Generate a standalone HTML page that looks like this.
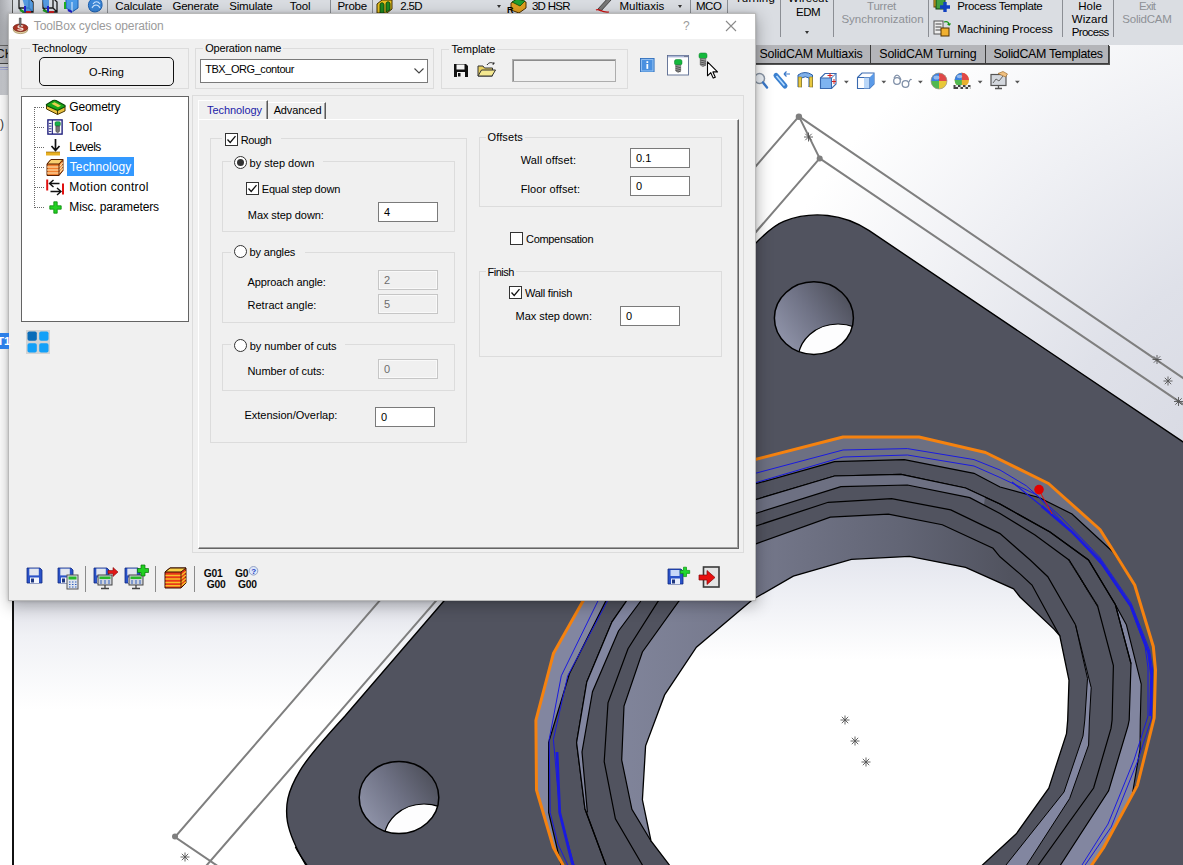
<!DOCTYPE html>
<html><head><meta charset="utf-8"><title>ToolBox cycles operation</title>
<style>
*{box-sizing:border-box;margin:0;padding:0}
html,body{width:1183px;height:865px;overflow:hidden;background:#fff}
body{position:relative;font-family:"Liberation Sans",sans-serif;font-size:11px;color:#000}
.abs{position:absolute}
#scene{position:absolute;left:0;top:0;width:1183px;height:865px}
#ribbon{position:absolute;left:0;top:0;width:1183px;height:45px;background:#dadde2}
.rt{line-height:14px}
.rg{color:#8e9196}
.vsep{position:absolute;width:1px;background:#8b8e94}
#tabs{position:absolute;left:0;top:45px;height:19px}
.ctab{position:absolute;top:45px;height:19px;background:#b4b5b9;border:1px solid #3c3c3c;border-top:none;font-size:12.4px;line-height:17px;white-space:nowrap;text-align:center;color:#000;box-shadow:1px 1px 0 #555}
#dlg{position:absolute;left:8px;top:13px;width:747.500px;height:588px;background:#f0f0f0;border:1px solid #b9b9b9;box-shadow:1px 4px 15px rgba(0,0,0,.30),0 0 3px rgba(0,0,0,.18)}
#dlg .in{position:absolute;left:-10px;top:-15px;width:1183px;height:865px}
#ttl{position:absolute;left:9px;top:14px;width:745.500px;height:25px;background:#fff}
.t{position:absolute;white-space:nowrap;line-height:13px;font-size:11px}
.gb{position:absolute;border:1px solid #dcdcdc}
.lg{position:absolute;background:#f0f0f0;white-space:nowrap;line-height:13px;padding:0 2px}
.inp{position:absolute;background:#fff;border:1px solid #7a7a7a;height:20px;line-height:18px;padding-left:5px;font-size:11px}
.inp.dis{background:#f0f0f0;border-color:#c6c6c6;color:#6d6d6d;box-shadow:inset 0 0 0 1px #f9f9f9}
.cb{position:absolute;width:13px;height:13px;background:#fff;border:1px solid #333}
.rb{position:absolute;width:13px;height:13px;background:#fff;border:1px solid #333;border-radius:50%}
.rb.on::after{content:"";position:absolute;left:2px;top:2px;width:7px;height:7px;border-radius:50%;background:#333}
.tree{font-size:12.4px;line-height:15px}
</style></head><body>
<svg id="scene" width="1183" height="865" viewBox="0 0 1183 865">
<defs>
<radialGradient id="bg1" gradientUnits="userSpaceOnUse" cx="1350" cy="560" r="650"><stop offset="0" stop-color="#cfd1dc"/><stop offset="0.5" stop-color="#dfe1e9"/><stop offset="1" stop-color="#ffffff"/></radialGradient>
<linearGradient id="bg2" gradientUnits="userSpaceOnUse" x1="0" y1="596" x2="0" y2="710"><stop offset="0" stop-color="#dcdee6"/><stop offset="0.35" stop-color="#f0f1f5"/><stop offset="1" stop-color="#ffffff"/></linearGradient>
<linearGradient id="holeg" gradientUnits="userSpaceOnUse" x1="0" y1="556" x2="0" y2="660"><stop offset="0" stop-color="#e4e6ee"/><stop offset="1" stop-color="#ffffff"/></linearGradient>
<linearGradient id="wallg" gradientUnits="userSpaceOnUse" x1="620" y1="0" x2="1010" y2="0"><stop offset="0" stop-color="#80849a"/><stop offset="0.36" stop-color="#74778a"/><stop offset="0.72" stop-color="#626575"/><stop offset="1" stop-color="#51535f"/></linearGradient>
<linearGradient id="h1g" gradientUnits="userSpaceOnUse" x1="785" y1="340" x2="845" y2="298"><stop offset="0" stop-color="#8c90a5"/><stop offset="0.5" stop-color="#6f7285"/><stop offset="1" stop-color="#51535f"/></linearGradient>
<linearGradient id="h2g" gradientUnits="userSpaceOnUse" x1="370" y1="820" x2="430" y2="778"><stop offset="0" stop-color="#8c90a5"/><stop offset="0.5" stop-color="#6f7285"/><stop offset="1" stop-color="#51535f"/></linearGradient>
<clipPath id="c1"><ellipse cx="813.9" cy="318.1" rx="39.5" ry="36.3"/></clipPath>
<clipPath id="c2"><ellipse cx="399" cy="797.5" rx="39.8" ry="36.1"/></clipPath>
</defs>
<rect width="1183" height="865" fill="url(#bg1)"/>
<rect y="596" width="1183" height="269" fill="url(#bg2)"/>
<g stroke="#7f7f7f" stroke-width="2" fill="none" stroke-linecap="round">
<path d="M798.9,116.4 L1200,389.6"/>
<path d="M819.7,158.4 L1200,415.8"/>
<path d="M798.9,116.4 L819.7,158.4"/>
<path d="M798.9,116.4 L175,837 L220,867.6"/>
<path d="M819.7,158.4 L205,867.2"/>
</g>
<circle cx="798.9" cy="116.8" r="3.2" fill="#7f7f7f"/><circle cx="819.7" cy="158.6" r="3" fill="#7f7f7f"/><circle cx="175" cy="836.5" r="3" fill="#7f7f7f"/>
<path d="M744,256 C755.8,242.4 770.8,226.4 783.8,221.3 A92.4,92.4 0 0 1 869.2,230.7 L1200,453.3 L1200,900 L330,900 L305.8,865 C297,850 290,836 287.5,822 C285,806 287,792 300,770.6 C308,757 323,740 345,716 L443.7,601.2 Z" fill="#51535f" stroke="#000" stroke-width="1.4"/>
<path d="M295.3,846.9 C300,856 306,864 312,872" fill="none" stroke="#000" stroke-width="1.2"/>
<ellipse cx="813.9" cy="318.1" rx="39.5" ry="36.3" fill="url(#h1g)"/>
<g clip-path="url(#c1)"><ellipse cx="838" cy="360" rx="40" ry="36" fill="#fdfdfe" stroke="#000" stroke-width="1.2"/></g>
<ellipse cx="813.9" cy="318.1" rx="39.5" ry="36.3" fill="none" stroke="#000" stroke-width="1.5"/>
<ellipse cx="399" cy="797.5" rx="39.8" ry="36.1" fill="url(#h2g)"/>
<g clip-path="url(#c2)"><ellipse cx="424" cy="840" rx="40" ry="36" fill="#fdfdfe" stroke="#000" stroke-width="1.2"/></g>
<ellipse cx="399" cy="797.5" rx="39.8" ry="36.1" fill="none" stroke="#000" stroke-width="1.5"/>
<polygon points="575.0,885.0 563.0,865.0 553.4,847.5 536.5,790.0 535.9,720.3 553.4,653.6 583.0,601.0 640.0,540.0 700.0,490.0 755.0,459.5 843.0,437.0 919.0,437.0 985.5,452.5 1048.5,483.5 1100.0,529.5 1134.7,585.0 1153.3,646.5 1155.5,670.0 1154.2,718.0 1137.3,785.6 1103.4,848.0 1091.7,865.0 1078.0,885.0" fill="#6d7082"/>
<polygon points="575.0,885.0 563.0,865.0 553.4,847.5 536.5,790.0 535.9,720.3 553.4,653.6 583.0,601.0 640.0,540.0 660.0,560.0 605.8,601.0 569.3,674.0 548.6,742.6 548.6,812.5 561.0,865.0 566.0,885.0" fill="#8286a0"/>
<polygon points="566.0,885.0 561.0,865.0 548.6,812.5 548.6,742.6 569.3,674.0 605.8,601.0 755.3,483.9 834.5,461.7 904.3,459.6 974.0,473.3 1000.0,487.0 1039.0,497.5 1072.0,514.0 1113.0,552.0 1134.7,585.0 1153.3,646.5 1155.5,670.0 1154.2,718.0 1137.3,785.6 1103.4,848.0 1091.7,865.0 1078.0,885.0" fill="#51535f" stroke="#000" stroke-width="1.2"/>
<polygon points="1115.3,604.4 1126.4,624.8 1141.2,684.0 1140.3,720.0 1140.0,749.0 1132.0,796.0 1137.3,785.6 1103.4,848.0 1091.7,865.0 1078.0,885.0 1047.0,885.0 1060.5,865.0 1108.6,790.8 1128.0,725.8 1129.2,720.0 1131.0,663.6" fill="#8286a0"/>
<polyline points="1115.3,604.4 1126.4,624.8 1141.2,684.0 1140.3,720.0 1140.0,749.0 1132.0,796.0" fill="none" stroke="#000" stroke-width="1.1"/>
<polygon points="612.0,885.0 605.8,865.0 585.0,809.0 576.6,742.6 586.8,682.0 612.0,621.8 626.5,601.0 755.3,499.7 834.5,476.0 901.0,474.4 965.6,488.0 1000.0,504.0 1050.0,532.0 1088.5,560.0 1115.3,604.4 1131.0,663.6 1129.2,720.0 1128.0,725.8 1108.6,790.8 1060.5,865.0 1047.0,885.0" fill="#51535f" stroke="#000" stroke-width="1.2"/>
<polygon points="700.0,560.0 755.3,499.7 834.5,476.0 901.0,474.4 965.6,488.0 985.0,497.0 984.0,505.0 969.8,497.6 907.4,485.0 840.9,486.6 755.3,513.5 705.0,572.0" fill="#6d7082"/>
<polygon points="626.5,601.0 612.0,621.8 586.8,682.0 576.6,742.6 585.0,809.0 587.4,812.5 582.0,752.0 592.5,691.7 618.5,631.0 640.8,601.0" fill="#8286a0"/>
<polyline points="755.3,513.5 840.9,486.6 907.4,485.0 969.8,497.6 1000.0,513.5 1035.0,535.0 1069.0,560.0 1097.7,606.3 1113.4,665.5 1112.1,720.0 1111.0,728.4 1093.6,788.0 1038.4,865.0 1024.0,885.0" fill="none" stroke="#000" stroke-width="1.2"/>
<polyline points="1069.0,560.0 1097.7,606.3" fill="none" stroke="#000" stroke-width="1.6" stroke-dasharray="1,1"/>
<polyline points="640.8,601.0 618.5,631.0 592.5,691.7 582.0,752.0 587.4,812.5" fill="none" stroke="#000" stroke-width="1.2"/>
<polyline points="626.5,601.0 612.0,621.8 586.8,682.0 576.6,742.6 585.0,809.0 605.8,865.0 612.0,885.0" fill="none" stroke="#000" stroke-width="1.2"/>
<polyline points="755.3,499.7 834.5,476.0 901.0,474.4 965.6,488.0 1000.0,504.0 1050.0,532.0 1088.5,560.0 1115.3,604.4 1131.0,663.6" fill="none" stroke="#000" stroke-width="1.2"/>
<polyline points="652.0,885.0 642.4,865.0 615.4,818.9 604.2,761.6 608.0,702.8 628.0,648.8 658.3,601.0 700.0,560.0 755.3,526.2 828.2,502.3 891.6,498.7 950.8,509.9 1000.0,533.6 1030.2,560.0 1047.8,576.7 1075.5,624.8" fill="none" stroke="#000" stroke-width="1.2"/>
<polygon points="1075.5,624.8 1087.5,678.4 1084.8,720.0 1083.0,736.0 1064.0,792.0 1006.0,865.0 990.0,885.0 1012.0,885.0 1026.7,865.0 1069.6,798.6 1088.6,745.0 1089.4,720.0 1091.2,687.7 1075.5,624.8" fill="#8286a0" stroke="#000" stroke-width="1"/>
<polygon points="651.0,841.0 651.0,841.0 631.9,809.3 621.7,760.0 624.0,706.0 642.4,652.0 679.0,601.0 720.0,570.0 755.3,544.1 830.3,517.1 888.4,514.1 942.3,524.7 993.0,548.3 1000.0,556.8 1020.0,573.9 1032.0,585.0 1059.8,635.9" fill="url(#wallg)" stroke="#000" stroke-width="1.2"/>
<polygon points="680.0,885.0 669.4,865.0 651.0,841.0 642.4,799.8 645.6,745.8 664.6,694.9 696.4,647.2 751.0,601.0 755.3,598.0 793.3,576.2 851.4,559.3 909.5,556.4 965.6,567.4 1013.6,588.8 1020.0,597.0 1054.2,629.4 1059.8,635.9 1069.0,680.3 1067.7,720.0 1066.5,733.6 1048.8,788.2 1016.3,833.8 982.5,865.0 960.0,885.0" fill="url(#holeg)" stroke="#000" stroke-width="1.3"/>
<polyline points="574.0,885.0 567.7,865.0 558.0,844.0 550.2,812.5 549.2,739.4 561.3,675.8 597.9,601.0 690.0,520.0 755.3,473.3 843.0,450.0 907.4,448.6 974.0,459.6 1000.0,470.0 1026.3,485.8 1060.0,516.0 1099.6,557.0 1131.0,603.0 1149.5,650.0 1152.5,668.0 1151.6,718.0 1137.3,762.0 1111.2,827.0 1085.2,865.0 1075.0,880.0" fill="none" stroke="#1a1ae0" stroke-width="1"/>
<polyline points="580.0,885.0 574.0,865.0 559.7,812.5 553.4,739.4 567.7,675.8 607.4,601.0 690.0,530.0 755.3,482.8 843.0,457.0 907.4,455.0 974.0,466.0 1000.0,477.5 1036.5,494.7 1070.0,530.0 1102.6,566.0 1130.0,606.0 1145.0,646.0 1148.0,668.0 1148.0,716.0 1134.0,760.0 1108.0,824.0 1082.0,865.0 1072.0,880.0" fill="none" stroke="#1a1ae0" stroke-width="1"/>
<polyline points="1041.6,506.0 1072.0,532.0 1099.6,560.0 1131.0,606.3 1148.5,652.5 1151.5,675.0 1150.5,716.0" fill="none" stroke="#1a1ae0" stroke-width="2.6"/>
<polyline points="1012.0,482.0 1041.6,506.0" fill="none" stroke="#1a1ae0" stroke-width="1.2"/>
<polyline points="557.0,752.0 559.7,812.5 572.0,862.0 580.0,885.0" fill="none" stroke="#1a1ae0" stroke-width="2.8"/>
<polyline points="575.0,885.0 563.0,865.0 553.4,847.5 536.5,790.0 535.9,720.3 553.4,653.6 583.0,601.0 640.0,540.0 700.0,490.0 755.0,459.5 843.0,437.0 919.0,437.0 985.5,452.5 1048.5,483.5 1100.0,529.5 1134.7,585.0 1153.3,646.5 1155.5,670.0 1154.2,718.0 1137.3,785.6 1103.4,848.0 1091.7,865.0 1078.0,885.0" fill="none" stroke="#f5820f" stroke-width="3" stroke-linejoin="round"/>
<path d="M1039,490 L1052,514" stroke="#e01010" stroke-width="1"/>
<circle cx="1039" cy="489.6" r="4.8" fill="#e00000"/>
<g stroke="#555" stroke-width="0.9"><line x1="804.0" y1="137.0" x2="813.0" y2="137.0"/><line x1="805.3" y1="133.8" x2="811.7" y2="140.2"/><line x1="808.5" y1="132.5" x2="808.5" y2="141.5"/><line x1="811.7" y1="133.8" x2="805.3" y2="140.2"/></g>
<g stroke="#555" stroke-width="0.9"><line x1="1152.5" y1="359.5" x2="1161.5" y2="359.5"/><line x1="1153.8" y1="356.3" x2="1160.2" y2="362.7"/><line x1="1157.0" y1="355.0" x2="1157.0" y2="364.0"/><line x1="1160.2" y1="356.3" x2="1153.8" y2="362.7"/></g>
<g stroke="#555" stroke-width="0.9"><line x1="1163.5" y1="381.0" x2="1172.5" y2="381.0"/><line x1="1164.8" y1="377.8" x2="1171.2" y2="384.2"/><line x1="1168.0" y1="376.5" x2="1168.0" y2="385.5"/><line x1="1171.2" y1="377.8" x2="1164.8" y2="384.2"/></g>
<g stroke="#555" stroke-width="0.9"><line x1="1174.0" y1="401.5" x2="1183.0" y2="401.5"/><line x1="1175.3" y1="398.3" x2="1181.7" y2="404.7"/><line x1="1178.5" y1="397.0" x2="1178.5" y2="406.0"/><line x1="1181.7" y1="398.3" x2="1175.3" y2="404.7"/></g>
<g stroke="#555" stroke-width="0.9"><line x1="840.5" y1="720.0" x2="849.5" y2="720.0"/><line x1="841.8" y1="716.8" x2="848.2" y2="723.2"/><line x1="845.0" y1="715.5" x2="845.0" y2="724.5"/><line x1="848.2" y1="716.8" x2="841.8" y2="723.2"/></g>
<g stroke="#555" stroke-width="0.9"><line x1="850.5" y1="741.0" x2="859.5" y2="741.0"/><line x1="851.8" y1="737.8" x2="858.2" y2="744.2"/><line x1="855.0" y1="736.5" x2="855.0" y2="745.5"/><line x1="858.2" y1="737.8" x2="851.8" y2="744.2"/></g>
<g stroke="#555" stroke-width="0.9"><line x1="861.5" y1="762.0" x2="870.5" y2="762.0"/><line x1="862.8" y1="758.8" x2="869.2" y2="765.2"/><line x1="866.0" y1="757.5" x2="866.0" y2="766.5"/><line x1="869.2" y1="758.8" x2="862.8" y2="765.2"/></g>
<g stroke="#555" stroke-width="0.9"><line x1="180.5" y1="857.0" x2="189.5" y2="857.0"/><line x1="181.8" y1="853.8" x2="188.2" y2="860.2"/><line x1="185.0" y1="852.5" x2="185.0" y2="861.5"/><line x1="188.2" y1="853.8" x2="181.8" y2="860.2"/></g>
</svg>
<div id="ribbon">
<div class="abs" style="left:0;top:0;width:12px;height:45px;background:linear-gradient(90deg,#a9abb0,#cfd1d6)"></div>
<div class="vsep" style="left:12px;top:0;height:14px;background:#555"></div>
<!-- small cube icons -->
<svg class="abs" style="left:16px;top:0" width="92" height="14" viewBox="0 0 92 14">
<g fill="none" stroke="#1b1b1b" stroke-width="1.3"><path d="M3,-2 L3,8 L13,8 L13,-2 M3,8 L7,12 L17,12 L17,2 L13,-2 M13,8 L17,12"/><path d="M27,-2 L27,8 L37,8 L37,-2 M27,8 L31,12 L41,12 L41,2 L37,-2 M37,8 L41,12"/></g>
<path d="M6,-2 L13,-2 L17,3 L17,11 L10,11 Z" fill="#3d8fe0" opacity=".85"/><path d="M26,-2 L33,-2 L33,8 L28,8 Z" fill="#3d8fe0" opacity=".85"/>
<path d="M9,6 v6" stroke="#2020d0" stroke-width="2"/><path d="M4,10 l4,2" stroke="#20a020" stroke-width="2"/><path d="M10,12 l5,0" stroke="#d02020" stroke-width="2"/>
<path d="M32,6 v6" stroke="#2020d0" stroke-width="2"/><path d="M33,12 l5,0" stroke="#d02020" stroke-width="2"/><path d="M27,10 l4,2" stroke="#20a020" stroke-width="2"/>
<path d="M50,-2 L50,8 L56,12 L62,8 L62,-2 Z" fill="#4a9be8" stroke="#1b5fb0" stroke-width="1"/><path d="M56,2 v10" stroke="#cfe6ff" stroke-width="1.2"/><path d="M49,2 v7" stroke="#20b020" stroke-width="2"/><path d="M52,10 l4,2" stroke="#2020d0" stroke-width="2"/>
<path d="M74,10 C70,4 74,-2 80,-2 C86,-2 88,6 84,10 C80,13 76,12 74,10 Z" fill="#3a86d8" stroke="#1b5fb0" stroke-width="1"/><path d="M76,8 c2,-4 6,-4 8,0 M77,4 c2,-3 5,-3 7,0" stroke="#cfe6ff" stroke-width="1.1" fill="none"/>
</svg>
<div class="vsep" style="left:107px;top:0;height:13px"></div>
<div class="vsep" style="left:330px;top:0;height:13px"></div>
<div class="vsep" style="left:372px;top:0;height:13px"></div>
<svg class="abs" style="left:376px;top:0" width="18" height="14" viewBox="0 0 18 14"><path d="M1,4 L6,0 L16,0 L16,9 L11,13 L1,13 Z" fill="#e8c020" stroke="#403000" stroke-width="1"/><path d="M4,13 L4,5 C4,2 8,2 8,5 L8,13 Z M10,12 L10,4 C10,1 14,1 14,4 L14,10 Z" fill="#1f8a1f" stroke="#0a3a0a" stroke-width=".8"/></svg>
<div class="abs" style="left:496.500px;top:5px;border:2.5px solid transparent;border-top:3px solid #333"></div>
<svg class="abs" style="left:507px;top:0" width="20" height="14" viewBox="0 0 20 14"><path d="M4,3 L10,-1 L19,2 L19,8 L12,13 L4,10 Z" fill="#e0a020" stroke="#503000" stroke-width="1"/><path d="M5,2 L10,-1 L18,1 L13,6 Z" fill="#20a030" stroke="#0a4a0a" stroke-width=".8"/><text x="0" y="13" font-family="Liberation Sans,sans-serif" font-size="9" font-weight="bold" fill="#000">R</text></svg>
<svg class="abs" style="left:593px;top:0" width="20" height="14" viewBox="0 0 20 14"><path d="M5,9 L15,-2 L18,0 L8,11 Z" fill="#777" stroke="#333" stroke-width=".8"/><path d="M3,10 C6,8 8,13 16,12" stroke="#d01010" stroke-width="1.2" fill="none"/></svg>
<div class="abs" style="left:678px;top:5px;border:2.5px solid transparent;border-top:3px solid #333"></div>
<div class="vsep" style="left:690px;top:0;height:13px"></div>
<div class="vsep" style="left:727px;top:0;height:37px"></div>
<div class="vsep" style="left:780px;top:0;height:37px"></div>
<div class="abs" style="left:805px;top:31px;border:2.5px solid transparent;border-top:3px solid #333"></div>
<div class="vsep" style="left:833px;top:0;height:37px"></div>
<div class="vsep" style="left:928px;top:0;height:37px"></div>
<svg class="abs" style="left:933px;top:0" width="18" height="14" viewBox="0 0 18 14"><rect x="1" y="-3" width="9" height="10" fill="#f0c030" stroke="#604000"/><rect x="3" y="-1" width="9" height="10" fill="#40a040" stroke="#104010"/><path d="M12,2 v10 M7,7 h10" stroke="#1040c0" stroke-width="3.4"/></svg>
<svg class="abs" style="left:933px;top:20px" width="18" height="17" viewBox="0 0 18 17"><rect x="1" y="1" width="9" height="13" fill="#eee" stroke="#555"/><path d="M2.5,4 h6 M2.5,7 h6 M2.5,10 h6" stroke="#444" stroke-width="1"/><rect x="8" y="8" width="8" height="8" fill="#f0b030" stroke="#503000"/><path d="M11,2 c3,-1 5,0 5,3 l-1.5,-1 m1.5,1 l1.5,-1.5" stroke="#109010" stroke-width="1.2" fill="none"/></svg>
<div class="vsep" style="left:1062px;top:0;height:37px"></div>
<div class="vsep" style="left:1113px;top:0;height:37px"></div>

<span class="t rt" style="left:115.3px;top:0px;font-size:11.5px;letter-spacing:-0.139px;">Calculate</span>
<span class="t rt" style="left:172.4px;top:0px;font-size:11.5px;letter-spacing:-0.194px;">Generate</span>
<span class="t rt" style="left:229.2px;top:0px;font-size:11.5px;letter-spacing:-0.181px;">Simulate</span>
<span class="t rt" style="left:289.8px;top:0px;font-size:11.5px;letter-spacing:-0.127px;">Tool</span>
<span class="t rt" style="left:337.4px;top:0px;font-size:11.5px;letter-spacing:-0.237px;">Probe</span>
<span class="t rt" style="left:400.3px;top:0px;font-size:11.5px;letter-spacing:-0.699px;">2.5D</span>
<span class="t rt" style="left:531.9px;top:0px;font-size:11.5px;letter-spacing:-0.681px;">3D HSR</span>
<span class="t rt" style="left:619.4px;top:0px;font-size:11.5px;letter-spacing:0.030px;">Multiaxis</span>
<span class="t rt" style="left:695.9px;top:0px;font-size:11.5px;letter-spacing:-0.381px;">MCO</span>
<span class="t rt" style="left:735px;top:-8px;font-size:11.5px;letter-spacing:0.203px;">Turning</span>
<span class="t rt" style="left:788px;top:-8px;font-size:11.5px;letter-spacing:0.145px;">Wirecut</span>
<span class="t rt" style="left:796px;top:6px;font-size:11.5px;letter-spacing:-0.521px;">EDM</span>
<span class="t rt rg" style="left:867px;top:0px;font-size:11.5px;letter-spacing:-0.192px;">Turret</span>
<span class="t rt rg" style="left:841.4px;top:13px;font-size:11.5px;letter-spacing:0.031px;">Synchronization</span>
<span class="t rt" style="left:957.3px;top:0px;font-size:11.5px;letter-spacing:-0.388px;">Process Template</span>
<span class="t rt" style="left:957.3px;top:23px;font-size:11.5px;letter-spacing:-0.103px;">Machining Process</span>
<span class="t rt" style="left:1078.3px;top:0px;font-size:11.5px;letter-spacing:-0.014px;">Hole</span>
<span class="t rt" style="left:1071.8px;top:13px;font-size:11.5px;letter-spacing:0.036px;">Wizard</span>
<span class="t rt" style="left:1071.8px;top:26px;font-size:11.5px;letter-spacing:-0.692px;">Process</span>
<span class="t rt rg" style="left:1139px;top:0px;font-size:11.5px;letter-spacing:-0.743px;">Exit</span>
<span class="t rt rg" style="left:1122.3px;top:13px;font-size:11.5px;letter-spacing:-0.218px;">SolidCAM</span>
</div>
<!-- command manager tabs -->
<div class="abs" style="left:0;top:45px;width:10px;height:20px;background:#b4b5b9;border-top:1px solid #666;border-bottom:2px solid #444"></div>
<span class="t" style="left:-4px;top:48px;font-size:12px;color:#111">CK</span>
<div class="ctab" style="left:755px;width:116px"></div><span class="t " style="left:759.5px;top:47px;font-size:12.4px;letter-spacing:-0.207px;line-height:15px">SolidCAM Multiaxis</span>
<div class="ctab" style="left:870px;width:116px"></div><span class="t " style="left:879.3px;top:47px;font-size:12.4px;letter-spacing:-0.172px;line-height:15px">SolidCAM Turning</span>
<div class="ctab" style="left:985px;width:124px"></div><span class="t " style="left:993.4px;top:47px;font-size:12.4px;letter-spacing:-0.305px;line-height:15px">SolidCAM Templates</span>
<!-- left strip -->
<div class="abs" style="left:0;top:64px;width:10px;height:31px;background:linear-gradient(90deg,#c4c6cb,#dcdee3)"></div>
<div class="abs" style="left:0;top:67px;width:10px;height:1px;background:#8f95c8"></div>
<div class="abs" style="left:0;top:69px;width:10px;height:1px;background:#aab0d8"></div>
<div class="abs" style="left:0;top:95px;width:11.500px;height:770px;background:#fff"></div>
<div class="abs" style="left:11.500px;top:95px;width:2px;height:770px;background:#111"></div>
<span class="t" style="left:0;top:118px;font-size:12px;color:#333">)</span>
<div class="abs" style="left:0;top:333px;width:8.800px;height:16px;background:#2d7fe8;z-index:5"></div>
<span class="t" style="left:-3px;top:334.500px;font-size:11.500px;color:#fff;font-weight:bold;z-index:6">T1</span>
<!-- heads-up toolbar -->
<svg class="abs" style="left:752px;top:68px" width="280" height="26" viewBox="0 0 280 26">
<g fill="none">
<circle cx="7.500" cy="10.500" r="5" stroke="#8a96a6" stroke-width="1.500" fill="#eef3f9"/><path d="M11,14.500 l4,5" stroke="#3a78c8" stroke-width="2.400" stroke-linecap="round"/>
<path d="M24,7.500 l9,10.500" stroke="#3a80d0" stroke-width="5" stroke-linecap="round"/><path d="M24.500,8 l8,9.500" stroke="#b8dcff" stroke-width="1.600"/><path d="M38,6 h-6 m0,0 l2.500,-2.500 m-2.500,2.500 l2.500,2.500" stroke="#3a78c8" stroke-width="1.200"/>
<path d="M46,7 q7,-5 14.500,0 v12 q-3,-2.500 -3.500,0 v-9 q-3.500,-2.500 -7.500,0 v9 q-1,-2.500 -3.500,0 z" fill="#7fb0ea" stroke="#2a5fa8" stroke-width="1"/><path d="M46.500,9 h3 v10 h-3 z M57.500,9 h3 v10 h-3 z" fill="#e8c840" stroke="#a08010" stroke-width=".6"/>
<path d="M68.500,10 l4.500,-4.500 h11 v10.500 l-4.500,4.500 h-11 z" fill="#fff" stroke="#3a6ab0" stroke-width="1.100"/><path d="M68.500,10 h11 v10.500 h-11 z" fill="#7fb4f0" stroke="#3a6ab0" stroke-width="1.100"/><path d="M79.500,10 l4.500,-4.500" stroke="#3a6ab0" stroke-width="1"/><path d="M78,5 v5 M75.500,7.500 h5 M82,11 v5 M80,13.500 h4" stroke="#d02020" stroke-width="1"/>
<path d="M92,12.800 h4.800 l-2.400,2.800 z" fill="#555"/>
<path d="M105.500,9.500 l4.500,-4.500 h12 v11 l-4.500,4.500 h-12 z" fill="#fdfdfe" stroke="#3a6ab0" stroke-width="1.100"/><path d="M117.500,9.500 l4.500,-4.500 v11 l-4.500,4.500 z" fill="#5a9ae8"/><path d="M105.500,9.500 h12 v11" stroke="#3a6ab0" stroke-width="1"/><path d="M112,9.500 h5.500 v11 h-5.500 z" fill="#a8ccf6" opacity=".8"/>
<path d="M129.400,12.800 h4.800 l-2.400,2.800 z" fill="#555"/>
<circle cx="145" cy="13" r="3.300" stroke="#8090a8" stroke-width="1.300"/><circle cx="153.500" cy="16" r="3.300" stroke="#8090a8" stroke-width="1.300"/><path d="M142,10 c2,-4 5,-4 7,2 M157,14 c1,-3 2,-3 2.500,-2" stroke="#8090a8" stroke-width="1.200"/>
<path d="M166,12.800 h4.800 l-2.400,2.800 z" fill="#555"/>
</g>
<circle cx="187" cy="13" r="8" fill="#e8c030"/><path d="M187,13 L187,5 A8,8 0 0 1 195,13 Z" fill="#e04848"/><path d="M187,13 L195,13 A8,8 0 0 1 187,21 Z" fill="#e8c838"/><path d="M187,13 L187,21 A8,8 0 0 1 179,13 Z" fill="#50b850"/><path d="M187,13 L179,13 A8,8 0 0 1 187,5 Z" fill="#3a80e0"/><circle cx="187" cy="13" r="8" fill="none" stroke="#999" stroke-width=".7"/><ellipse cx="184.500" cy="9.500" rx="3" ry="2" fill="#fff" opacity=".45"/>
<circle cx="209.800" cy="12" r="7.200" fill="#e8b030"/><path d="M209.800,12 L209.800,4.800 A7.200,7.200 0 0 1 217,12 Z" fill="#e04848"/><path d="M209.800,12 L202.600,12 A7.200,7.200 0 0 1 209.800,4.800 Z" fill="#3a80e0"/><path d="M209.800,12 L202.600,12 A7.200,7.200 0 0 0 209.800,19.200 Z" fill="#50b850"/><ellipse cx="207.500" cy="8.500" rx="2.800" ry="1.800" fill="#fff" opacity=".45"/>
<path d="M201.500,17 h17 v4 h-17 z" fill="#444"/><path d="M203.500,17 h2.500 v2 h-2.500z M208.500,17 h2.500 v2 h-2.500z M213.500,17 h2.500 v2 h-2.500z M206,19 h2.500 v2 h-2.500z M211,19 h2.500 v2 h-2.500z M216,19 h2.500 v2 h-2.500z" fill="#e8e8e8"/>
<path d="M225.700,12.800 h4.800 l-2.400,2.800 z" fill="#555"/>
<rect x="239" y="6.500" width="15" height="11" fill="#d4d8de" stroke="#555" stroke-width="1.200"/><path d="M241,15 l3,-4 l3,2 l4,-5" stroke="#666" stroke-width="1" fill="none"/><path d="M243,20.500 h7 M246.500,17.500 v3" stroke="#555" stroke-width="1.300"/><path d="M246,5.500 l5,-2 l4.500,2.500 l-2,3 z" fill="#f0c080" stroke="#a07030" stroke-width=".7"/>
<path d="M263,12.800 h4.800 l-2.400,2.800 z" fill="#555"/>
</svg>

<div id="dlg"></div>
<div id="ttl"></div>
<!-- title icon -->
<svg class="abs" style="left:12px;top:17px" width="17" height="18" viewBox="0 0 17 18">
<ellipse cx="8.500" cy="12.800" rx="7.300" ry="3.800" fill="#e0cfa0" stroke="#a08858" stroke-width=".7"/>
<ellipse cx="8.500" cy="10.800" rx="7.300" ry="3.800" fill="#a83424" stroke="#6a1810" stroke-width=".7"/>
<path d="M11,9.300 c-2,-1.200 -5,-.6 -5,.8 c0,1.400 5,.6 5,2 c0,1.200 -3.500,1.400 -5.500,.4" fill="none" stroke="#f4e8e0" stroke-width="1.300"/>
<path d="M7.300,1 h1.800 v6.500 l-.9,2 l-.9,-2 z" fill="#777" stroke="#333" stroke-width=".5"/>
</svg>
<span class="t " style="left:33.8px;top:19px;font-size:12px;letter-spacing:-0.119px;line-height:14px;color:#9b9b9b;">ToolBox cycles operation</span>
<span class="t " style="left:683px;top:19px;font-size:12px;line-height:14px;color:#9b9b9b">?</span>
<svg class="abs" style="left:725px;top:20px" width="12" height="12" viewBox="0 0 12 12"><path d="M1,1 L11,11 M11,1 L1,11" stroke="#8a8a8a" stroke-width="1.1"/></svg>

<!-- Technology group -->
<div class="gb" style="left:21px;top:48px;width:168px;height:41px"></div>
<span class="t lg" style="left:30px;top:42px;font-size:11px;letter-spacing:-0.066px;">Technology</span>
<div class="abs" style="left:39px;top:57px;width:135px;height:29px;border:1.5px solid #111;border-radius:5px;background:#f1f1f1;text-align:center;line-height:28.500px;font-size:11px">O-Ring</div>
<!-- Operation name -->
<div class="gb" style="left:195px;top:48px;width:239px;height:41px"></div>
<span class="t lg" style="left:203.2px;top:42px;font-size:11px;letter-spacing:-0.199px;">Operation name</span>
<div class="inp" style="left:200px;top:59px;width:228px;height:24px"></div><span class="t " style="left:205.2px;top:63px;font-size:11px;letter-spacing:-0.438px;">TBX_ORG_contour</span>
<svg class="abs" style="left:413px;top:67px" width="12" height="8" viewBox="0 0 12 8"><path d="M1.500,1.500 L6,6 L10.500,1.500" stroke="#444" stroke-width="1.1" fill="none"/></svg>
<!-- Template -->
<div class="gb" style="left:441px;top:49px;width:187px;height:40px"></div>
<span class="t lg" style="left:449.4px;top:43px;font-size:11px;letter-spacing:-0.080px;">Template</span>
<svg class="abs" style="left:453px;top:63px" width="16" height="15" viewBox="0 0 16 15"><path d="M1,1 h12 l2,2 v11 h-14 z" fill="#111"/><rect x="3.500" y="1.500" width="8" height="5" fill="#f4f4f4"/><rect x="4" y="9" width="8" height="5" fill="#f4f4f4"/><rect x="5" y="10" width="2.500" height="3.500" fill="#111"/></svg>
<svg class="abs" style="left:477px;top:61px" width="20" height="17" viewBox="0 0 20 17"><path d="M1,15 V5 h5 l1.500,2 h8 v8 z" fill="#e8d060" stroke="#333" stroke-width="1"/><path d="M1,15 l3.500,-6 h14 l-3.500,6 z" fill="#f4e890" stroke="#333" stroke-width="1"/><path d="M10,4 c2,-3 5,-3 7,-1 l-1.500,.2 m1.500,-.2 l-.2,-1.800" stroke="#222" stroke-width="1" fill="none"/></svg>
<div class="abs" style="left:512px;top:59px;width:104px;height:23px;border:1px solid #adadad;background:#f0f0f0;box-shadow:inset 1px 1px 0 #8c8c8c"></div>
<!-- right icons -->
<svg class="abs" style="left:640px;top:57.500px" width="14.500" height="14.500" viewBox="0 0 18 18"><rect x=".5" y=".5" width="17" height="17" fill="#5b9ee6" stroke="#2a68b8"/><rect x="2" y="2" width="14" height="14" fill="#4a90e0" stroke="#9cc6f4" stroke-width="1"/><rect x="8" y="7.500" width="2.200" height="6" fill="#fff"/><rect x="8" y="4" width="2.200" height="2.200" fill="#fff"/></svg>
<svg class="abs" style="left:666px;top:54px" width="24" height="22" viewBox="0 0 24 22"><rect x="1.500" y="1.500" width="21" height="19.500" fill="#fff" stroke="#5a6a90" stroke-width=".9"/><path d="M2,2.600 h20" stroke="#aab6d6" stroke-width="1.600"/><path d="M18.500,2.500 h1 M20.500,2.500 h1" stroke="#445" stroke-width="1"/><rect x="8.500" y="5.500" width="7.500" height="5.500" rx="1.800" fill="#14b83c" stroke="#0a7a28" stroke-width=".5"/><path d="M9.700,11 h5 v6 l-2.500,1.500 l-2.500,-1.500 z" fill="#9a9a9a" stroke="#555" stroke-width=".5"/><path d="M9.700,12.500 l5,1.200 M9.700,14.500 l5,1.200 M9.700,16.500 l5,1.200" stroke="#333" stroke-width=".7"/></svg>
<svg class="abs" style="left:697px;top:52px" width="26" height="28" viewBox="0 0 26 28"><rect x="2" y="1" width="8" height="5.500" rx="1.800" fill="#14b83c" stroke="#0a7a28" stroke-width=".5"/><path d="M3.200,6.500 h5.600 v6.500 l-2.800,1.700 l-2.800,-1.700 z" fill="#9a9a9a" stroke="#555" stroke-width=".5"/><path d="M3.200,8 l5.600,1.300 M3.200,10 l5.600,1.300 M3.200,12 l5.600,1.300" stroke="#333" stroke-width=".7"/><path d="M10.500,9.800 v14 l3.300,-3.100 l2.400,5.400 l2.100,-.9 l-2.400,-5.300 h4.600 z" fill="#fff" stroke="#000" stroke-width="1.100" stroke-linejoin="round"/></svg>

<!-- tree -->
<div class="abs" style="left:21px;top:96px;width:168px;height:226px;background:#fff;border:1px solid #646464"></div>
<svg class="abs" style="left:29px;top:98px" width="40" height="122" viewBox="0 0 40 122"><path d="M5.500,9 V110 M6,9.500 H16 M6,29.500 H16 M6,49.500 H16 M6,69.500 H16 M6,89.500 H16 M6,109.500 H16" stroke="#6a6a6a" stroke-width="1" stroke-dasharray="1,1" fill="none" shape-rendering="crispEdges"/></svg>
<!-- tree icons -->
<svg class="abs" style="left:45px;top:99px" width="22" height="17" viewBox="0 0 22 17"><path d="M1.500,5.500 v4.500 l11,5.500 l7.500,-3.500 v-4.500 z" fill="#e8c040" stroke="#4a3800" stroke-width="1"/><path d="M12.500,11 v4.500" stroke="#4a3800" stroke-width="1"/><path d="M1.500,5.500 L8,1.500 Q9.500,1 11,1.500 L20,6.500 Q20.500,7.500 19.500,8 L13.500,11 Q12.500,11.500 11.500,11 L2,6.800 Q1,6 1.500,5.500 Z" fill="#18a818" stroke="#0a4a0a" stroke-width="1.100"/><path d="M6.500,4.800 l3,-1.500 l6.500,3.400 l-3,1.500 z" fill="#e8d050"/></svg>
<svg class="abs" style="left:46.500px;top:118.500px" width="16" height="16" viewBox="0 0 18 18"><rect x="1" y="1" width="16" height="16" fill="#fbfbfb" stroke="#1a1a7a" stroke-width="1.500"/><path d="M6,1 v16" stroke="#1a1a7a" stroke-width="1.200"/><path d="M2,5 h3 M2,8 h3 M2,11 h3 M2,14 h3" stroke="#1a1a7a" stroke-width="1"/><rect x="9" y="3" width="6" height="5" rx="1.500" fill="#18b048" stroke="#0a6a28" stroke-width=".6"/><path d="M10,8 h4 v6 l-2,1.500 l-2,-1.500 z" fill="#777" stroke="#333" stroke-width=".6"/></svg>
<svg class="abs" style="left:45.200px;top:138.700px" width="22" height="18" viewBox="0 0 22 18"><path d="M10.500,0 v11 M6.500,7 l4,4.500 l4,-4.500" stroke="#111" stroke-width="1.700" fill="none"/><rect x="1" y="13" width="14" height="3.500" fill="#e8b020"/><path d="M1,13 h14" stroke="#805000" stroke-width=".6"/></svg>
<svg class="abs" style="left:45px;top:158px" width="20" height="19" viewBox="0 0 20 19"><path d="M2,6 L6,1.500 h12 v11 l-4,5 h-12 z" fill="#f08030" stroke="#5a2000" stroke-width="1"/><path d="M2,6 L6,1.500 h12 l-4,4.500 z" fill="#f8d070" stroke="#5a2000" stroke-width="1"/><path d="M2,9 h12 l4,-4.500 M2,12 h12 l4,-4.500 M2,15 h12 l4,-4.500" stroke="#fff0c0" stroke-width="1.100" fill="none"/><path d="M14,6 v11.500" stroke="#5a2000" stroke-width="1"/></svg>
<svg class="abs" style="left:45px;top:178px" width="22" height="19" viewBox="0 0 22 19"><path d="M2.200,1.500 v11" stroke="#e01010" stroke-width="2"/><path d="M18,5.500 v11" stroke="#e01010" stroke-width="2"/><path d="M4.500,5.500 h10 M8.500,2 l-4,3.500 l4,3.500" stroke="#111" stroke-width="1.400" fill="none"/><path d="M5.500,13.500 h10.500 M12,10 l4,3.500 l-4,3.500" stroke="#111" stroke-width="1.400" fill="none"/></svg>
<svg class="abs" style="left:48.500px;top:200.500px" width="13" height="13" viewBox="0 0 13 13"><path d="M4.800,.8 h3.400 v4 h4 v3.400 h-4 v4 h-3.400 v-4 h-4 v-3.400 h4 z" fill="#22d022" stroke="#0a8a0a" stroke-width=".8"/></svg>
<span class="t tree" style="left:69.3px;top:100px;font-size:12px;letter-spacing:-0.211px;">Geometry</span>
<span class="t tree" style="left:69.3px;top:120px;font-size:12px;letter-spacing:0.321px;">Tool</span>
<span class="t tree" style="left:69.3px;top:140px;font-size:12px;letter-spacing:-0.548px;">Levels</span>
<div class="abs" style="left:67px;top:157px;width:67px;height:19px;background:#3399ff"></div>
<span class="t tree" style="left:69.8px;top:160px;font-size:12px;letter-spacing:0.078px;color:#fff;">Technology</span>
<span class="t tree" style="left:69.3px;top:180px;font-size:12px;letter-spacing:0.295px;">Motion control</span>
<span class="t tree" style="left:69.3px;top:200px;font-size:12px;letter-spacing:-0.152px;">Misc. parameters</span>
<!-- tiles -->
<svg class="abs" style="left:26px;top:330px" width="24" height="24" viewBox="0 0 24 24"><rect x="0" y="0" width="24" height="24" fill="#d3d3d3"/><rect x="1.500" y="1.500" width="9.300" height="9.300" rx="1.800" fill="#0a6cb8"/><rect x="13.200" y="1.500" width="9.300" height="9.300" rx="1.800" fill="#12a0f8"/><rect x="1.500" y="13.200" width="9.300" height="9.300" rx="1.800" fill="#12a0f8"/><rect x="13.200" y="13.200" width="9.300" height="9.300" rx="1.800" fill="#12a0f8"/></svg>

<!-- tab control -->
<div class="abs" style="left:192px;top:95px;width:552px;height:458px;border:1px solid #dcdcdc"></div>
<div class="abs" style="left:198px;top:119px;width:541px;height:430px;border-top:1px solid #fff;border-left:1px solid #fff;border-right:1px solid #646464;border-bottom:1px solid #646464;box-shadow:inset -1px -1px 0 #a0a0a0"></div>
<div class="abs" style="left:198px;top:100px;width:70px;height:19px;background:#f0f0f0;border-top:1px solid #fff;border-left:1px solid #fff;border-right:1px solid #5a5a5a;box-shadow:inset -1px 0 0 #a0a0a0"></div>
<div class="abs" style="left:268px;top:102px;width:58px;height:17px;border-top:1px solid #fff;border-right:1px solid #5a5a5a;box-shadow:inset -1px 0 0 #a0a0a0"></div>
<span class="t " style="left:207px;top:104px;font-size:11px;letter-spacing:-0.066px;color:#1c1ca8;">Technology</span>
<span class="t " style="left:273.7px;top:104px;font-size:11px;letter-spacing:-0.155px;">Advanced</span>

<!-- Rough -->
<div class="gb" style="left:210px;top:138px;width:257px;height:305px"></div>
<div class="abs" style="left:222px;top:132px;width:59px;height:16px;background:#f0f0f0"></div>
<div class="cb" style="left:225px;top:133px"></div><svg class="abs" style="left:225px;top:133px" width="13" height="13"><path d="M2.500,6.500 L5.200,9.500 L10.500,3.200" stroke="#111" stroke-width="1.300" fill="none"/></svg>
<span class="t " style="left:240.7px;top:134px;font-size:11px;letter-spacing:-0.384px;">Rough</span>
<div class="gb" style="left:222px;top:161px;width:233px;height:71px"></div>
<div class="abs" style="left:231px;top:155px;width:92px;height:15px;background:#f0f0f0"></div>
<div class="rb on" style="left:234px;top:156px"></div>
<span class="t " style="left:249.6px;top:157px;font-size:11px;letter-spacing:-0.011px;">by step down</span>
<div class="cb" style="left:246px;top:182px"></div><svg class="abs" style="left:246px;top:182px" width="13" height="13"><path d="M2.500,6.500 L5.200,9.500 L10.500,3.200" stroke="#111" stroke-width="1.300" fill="none"/></svg>
<span class="t " style="left:261.8px;top:183px;font-size:11px;letter-spacing:-0.203px;">Equal step down</span>
<span class="t " style="left:247.8px;top:209px;font-size:11px;letter-spacing:-0.075px;">Max step down:</span>
<div class="inp" style="left:378px;top:202px;width:60px">4</div>
<div class="gb" style="left:222px;top:252px;width:233px;height:71px"></div>
<div class="abs" style="left:231px;top:245px;width:74px;height:15px;background:#f0f0f0"></div>
<div class="rb" style="left:234px;top:245px"></div>
<span class="t " style="left:249.6px;top:246px;font-size:11px;letter-spacing:-0.166px;">by angles</span>
<span class="t " style="left:247.6px;top:276px;font-size:11px;letter-spacing:-0.142px;">Approach angle:</span>
<div class="inp dis" style="left:378px;top:270px;width:60px">2</div>
<span class="t " style="left:247.5px;top:299px;font-size:11px;letter-spacing:0.030px;">Retract angle:</span>
<div class="inp dis" style="left:378px;top:294px;width:60px">5</div>
<div class="gb" style="left:222px;top:344px;width:233px;height:47px"></div>
<div class="abs" style="left:231px;top:338px;width:114px;height:15px;background:#f0f0f0"></div>
<div class="rb" style="left:234px;top:339px"></div>
<span class="t " style="left:249.7px;top:340px;font-size:11px;letter-spacing:-0.038px;">by number of cuts</span>
<span class="t " style="left:247.4px;top:365px;font-size:11px;letter-spacing:-0.036px;">Number of cuts:</span>
<div class="inp dis" style="left:378px;top:359px;width:60px">0</div>
<span class="t " style="left:244.4px;top:409px;font-size:11px;letter-spacing:0.003px;">Extension/Overlap:</span>
<div class="inp" style="left:375px;top:407px;width:60px">0</div>

<!-- Offsets -->
<div class="gb" style="left:479px;top:137px;width:243px;height:70px"></div>
<span class="t lg" style="left:485.5px;top:131px;font-size:11px;letter-spacing:0.121px;">Offsets</span>
<span class="t " style="left:520.7px;top:154px;font-size:11px;letter-spacing:0.134px;">Wall offset:</span>
<div class="inp" style="left:630px;top:148px;width:60px">0.1</div>
<span class="t " style="left:520.7px;top:183px;font-size:11px;letter-spacing:0.124px;">Floor offset:</span>
<div class="inp" style="left:630px;top:176px;width:60px">0</div>
<div class="cb" style="left:510px;top:232px"></div>
<span class="t " style="left:526px;top:233px;font-size:11px;letter-spacing:-0.311px;">Compensation</span>
<div class="gb" style="left:479px;top:271px;width:243px;height:86px"></div>
<span class="t lg" style="left:485.5px;top:266px;font-size:11px;letter-spacing:-0.474px;">Finish</span>
<div class="cb" style="left:509px;top:286px"></div><svg class="abs" style="left:509px;top:286px" width="13" height="13"><path d="M2.500,6.500 L5.200,9.500 L10.500,3.200" stroke="#111" stroke-width="1.300" fill="none"/></svg>
<span class="t " style="left:525px;top:287px;font-size:11px;letter-spacing:-0.238px;">Wall finish</span>
<span class="t " style="left:515.6px;top:310px;font-size:11px;letter-spacing:-0.053px;">Max step down:</span>
<div class="inp" style="left:620px;top:306px;width:60px">0</div>

<!-- bottom toolbar -->
<svg class="abs" style="left:24px;top:564px" width="240" height="30" viewBox="0 0 240 30">
<defs><g id="fl"><path d="M0,0 h13 l2,2 v13 h-15 z" fill="#2a52c8" stroke="#102880" stroke-width=".8"/><rect x="2.300" y=".6" width="9.500" height="6.800" fill="#e2e6ee"/><rect x="3" y="9.500" width="9" height="5.500" fill="#f4f6fc"/><rect x="4" y="10.500" width="3" height="4" fill="#203880"/></g>
<g id="mon"><rect x="0" y="0" width="14" height="10" fill="#d0d4dc" stroke="#444" stroke-width="1"/><rect x="1.500" y="1.500" width="11" height="2.500" fill="#28b828"/><path d="M2,6 h2 M6,6 h2 M10,6 h2 M2,8 h2 M6,8 h2 M10,8 h2" stroke="#3060c0" stroke-width="1"/><path d="M7,10 v3 M3,13.500 h8" stroke="#444" stroke-width="1.300"/></g></defs>
<use href="#fl" x="3" y="4"/>
<use href="#fl" x="34" y="4" transform="translate(0,0)"/>
<rect x="43" y="11" width="11" height="14" fill="#dfe4ec" stroke="#555" stroke-width="1"/><rect x="44.500" y="12.500" width="8" height="3" fill="#28b828"/><path d="M45,18 h1.500 M48,18 h1.500 M51,18 h1.500 M45,20.500 h1.500 M48,20.500 h1.500 M51,20.500 h1.500 M45,23 h1.500 M48,23 h1.500 M51,23 h1.500" stroke="#3060c0" stroke-width="1.200"/>
<path d="M61.500,2 v26" stroke="#8a8a8a" stroke-width="1"/>
<use href="#fl" x="70" y="4"/><use href="#mon" x="74" y="11"/><path d="M84,6.500 h5 v-3 l5,4.500 l-5,4.500 v-3 h-5 z" fill="#e01818" stroke="#800808" stroke-width=".6"/>
<use href="#fl" x="101" y="4"/><use href="#mon" x="105" y="11"/><path d="M117,1 h4 v3.500 h3.500 v4 h-3.500 v3.500 h-4 v-3.500 h-3.500 v-4 h3.500 z" fill="#20d020" stroke="#0a700a" stroke-width=".7"/>
<path d="M131.500,2 v26" stroke="#8a8a8a" stroke-width="1"/>
<path d="M141,8 l5,-4 h16 v15 l-5,5 h-16 z" fill="#e83818" stroke="#3a1000" stroke-width="1"/><path d="M141,8 l5,-4 h16 l-5,4 z" fill="#f8d048" stroke="#3a1000" stroke-width="1"/><path d="M141.500,11.500 h15.500 l5,-4 M141.500,15 h15.500 l5,-4 M141.500,18.500 h15.500 l5,-4 M141.500,21.800 h15.500 l5,-4" stroke="#f8c028" stroke-width="1.400" fill="none"/><path d="M157,8 v16" stroke="#5a2000" stroke-width="1"/>
<path d="M170.500,2 v26" stroke="#8a8a8a" stroke-width="1"/>
<g font-family="Liberation Sans,sans-serif" font-weight="bold" font-size="10.300" fill="#0a0a0a" letter-spacing="-.25"><text x="179.700" y="12.900">G01</text><text x="182.800" y="23.900">G00</text><text x="210.900" y="12.900">G0</text><text x="213.900" y="23.900">G00</text></g>
<circle cx="229.500" cy="6.800" r="4.300" fill="#dce6fa" stroke="#8090b8" stroke-width=".8"/><text x="227.300" y="9.800" font-family="Liberation Sans,sans-serif" font-size="8" font-weight="bold" fill="#2040c0">?</text>
</svg>
<svg class="abs" style="left:664px;top:564px" width="60" height="30" viewBox="0 0 60 30">
<path d="M4,5 h13 l2,2 v13 h-15 z" fill="#2a52c8" stroke="#102880" stroke-width=".8"/><rect x="6.500" y="6" width="9" height="6" fill="#c8d8f8"/><rect x="7" y="14.500" width="9" height="5.500" fill="#e8eefc"/><rect x="8" y="15.500" width="3" height="4" fill="#203880"/>
<path d="M19.500,3.200 h3 v3.200 h3.200 v3 h-3.200 v3.200 h-3 v-3.200 h-3.200 v-3 h3.200 z" fill="#20d830" stroke="#0a900a" stroke-width=".7"/>
<rect x="39.500" y="3" width="15.500" height="20" fill="#e4e4e4" stroke="#3a3a3a" stroke-width="1.600"/>
<path d="M35,11 h8 v-4.500 l8,7 l-8,7 v-4.500 h-8 z" fill="#e81010" stroke="#800808" stroke-width=".7"/>
</svg>

</body></html>
